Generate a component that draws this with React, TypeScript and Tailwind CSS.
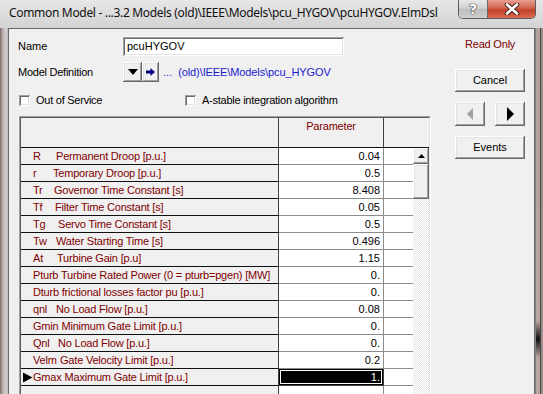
import React from 'react';

const raised =
  'bg-[#f0f0f0] shadow-[inset_-1px_-1px_0_#696969,inset_1px_1px_0_#ffffff,inset_-2px_-2px_0_#a0a0a0,inset_2px_2px_0_#e3e3e3]';
const sunken =
  'bg-white shadow-[inset_1px_1px_0_#a0a0a0,inset_-1px_-1px_0_#ffffff,inset_2px_2px_0_#696969,inset_-2px_-2px_0_#e3e3e3]';

type Row = { c: string; w: string; d: string; v: string; sel?: boolean };

const rows: Row[] = [
  { c: 'R', w: 'min-w-[20px]', d: 'Permanent Droop [p.u.]', v: '0.04' },
  { c: 'r', w: 'min-w-[17px]', d: 'Temporary Droop [p.u.]', v: '0.5' },
  { c: 'Tr', w: 'min-w-[18px]', d: 'Governor Time Constant [s]', v: '8.408' },
  { c: 'Tf', w: 'min-w-[19px]', d: 'Filter Time Constant [s]', v: '0.05' },
  { c: 'Tg', w: 'min-w-[22px]', d: 'Servo Time Constant [s]', v: '0.5' },
  { c: 'Tw', w: 'min-w-[20px]', d: 'Water Starting Time [s]', v: '0.496' },
  { c: 'At', w: 'min-w-[21px]', d: 'Turbine Gain [p.u]', v: '1.15' },
  { c: 'Pturb', w: '', d: 'Turbine Rated Power (0 = pturb=pgen) [MW]', v: '0.' },
  { c: 'Dturb', w: '', d: 'frictional losses factor pu [p.u.]', v: '0.' },
  { c: 'qnl', w: 'min-w-[20px]', d: 'No Load Flow [p.u.]', v: '0.08' },
  { c: 'Gmin', w: 'min-w-[23px]', d: 'Minimum Gate Limit [p.u.]', v: '0.' },
  { c: 'Qnl', w: 'min-w-[22px]', d: 'No Load Flow [p.u.]', v: '0.' },
  { c: 'Velm', w: 'min-w-[24px]', d: 'Gate Velocity Limit [p.u.]', v: '0.2' },
  { c: 'Gmax', w: 'min-w-[24px]', d: 'Maximum Gate Limit [p.u.]', v: '1.', sel: true },
];

function TableRow({ r }: { r: Row }) {
  return (
    <div className="flex h-[17px]">
      <div className="w-[258px] h-full flex items-center border-b border-r border-b-[#101010] border-r-[#404040] bg-[#f0f0f0] text-[#800000] tracking-[-0.2px] whitespace-nowrap overflow-hidden">
        {r.sel ? (
          <svg width="11" height="11" viewBox="0 0 11 11" className="ml-[1px] shrink-0">
            <path d="M1 0.5 L10.5 5.5 L1 10.5 Z" fill="#000" />
          </svg>
        ) : (
          <span className="w-[12px] shrink-0" />
        )}
        {r.w ? (
          <>
            <span className={`${r.w} shrink-0 whitespace-nowrap`}>{r.c}</span>
            <span className="ml-[3px]">{r.d}</span>
          </>
        ) : (
          <span>
            {r.c} {r.d}
          </span>
        )}
      </div>
      <div
        className={
          r.sel
            ? 'w-[105px] h-full flex items-center justify-end pr-[3px] bg-black text-white border-b border-r border-[#404040] shadow-[inset_0_0_0_1px_#000,inset_0_0_0_2px_#ffffff]'
            : 'w-[105px] h-full flex items-center justify-end pr-[3px] bg-white text-black border-b border-r border-b-[#8c8c8c] border-r-[#8c8c8c]'
        }
      >
        {r.v}
      </div>
      <div className="w-[29px] h-full bg-white border-b border-[#8c8c8c]" />
    </div>
  );
}

export default function App() {
  return (
    <div className="w-[543px] h-[394px] overflow-hidden bg-[#d4d4d4] font-['Liberation_Sans',Arial,sans-serif] text-[11px] leading-[13px] select-none">
      {/* Title bar */}
      <div className="h-[28px] flex items-start bg-[linear-gradient(#e6e6e6,#d3d3d3)]">
        <div className="pl-[9px] pt-[5px] text-[12px] leading-[16px] tracking-[-0.32px] text-[#111] whitespace-nowrap font-['Noto_Sans',sans-serif]">
          Common Model - ...3.2 Models (old)\IEEE\Models\pcu_HYGOV\pcuHYGOV.ElmDsl
        </div>
        <div className="ml-auto mr-[7px] flex h-[19px] rounded-b-[5px] border border-t-0 border-[#5c5c5c] overflow-hidden shrink-0">
          <div className="w-[29px] h-full flex items-center justify-center bg-[linear-gradient(#e8e8e8,#d0d0d0_45%,#bcbcbc_55%,#cfcfcf)] border-r border-[#6a6a6a]">
            <span className="text-[14px] font-bold text-white leading-[14px] font-['DejaVu_Sans',sans-serif] [text-shadow:0_0_1px_#303030,0_0_1px_#303030,0_0_1px_#303030]">
              ?
            </span>
          </div>
          <div className="w-[47px] h-full flex items-center justify-center bg-[linear-gradient(#e8a090,#d2624e_45%,#c2402a_55%,#d96b50)]">
            <svg width="16" height="12" viewBox="0 0 16 12">
              <path d="M3 1.5 L13 10.5 M13 1.5 L3 10.5" stroke="#4a2a24" strokeWidth="4.6" strokeLinecap="round" />
              <path d="M3 1.5 L13 10.5 M13 1.5 L3 10.5" stroke="#ffffff" strokeWidth="2.6" strokeLinecap="round" />
            </svg>
          </div>
        </div>
      </div>

      {/* Body */}
      <div className="flex h-[366px]">
        <div className="w-[8px] h-full bg-[linear-gradient(to_right,#7c6a64,#bdb3b0_35%,#cfcfcf_75%,#b9b9b9)]" />
        <div className="w-[527px] h-full bg-[#f0f0f0] border-l border-t border-r border-[#6a6a6a] flex">
          {/* Left area */}
          <div className="w-[446px] flex flex-col">
            {/* Name */}
            <div className="mt-[8px] h-[19px] pl-[9px] flex items-center">
              <div className="w-[105px] text-black">Name</div>
              <div className={`${sunken} w-[221px] h-[19px] flex items-center pl-[4px] text-black`}>pcuHYGOV</div>
            </div>
            {/* Model definition */}
            <div className="mt-[6px] h-[20px] pl-[9px] flex items-center">
              <div className="w-[105px] text-black tracking-[-0.25px]">Model Definition</div>
              <div className={`${raised} w-[19px] h-[20px] flex items-center justify-center`}>
                <svg width="10" height="6" viewBox="0 0 10 6">
                  <path d="M0 0 L10 0 L5 6 Z" fill="#000" />
                </svg>
              </div>
              <div className={`${raised} w-[17px] h-[20px] flex items-center justify-center`}>
                <svg width="9" height="8" viewBox="0 0 9 8">
                  <path d="M0 2.5 H4.5 V0 L9 4 L4.5 8 V5.5 H0 Z" fill="#000080" />
                </svg>
              </div>
              <span className="ml-[4px] text-[#3030e0]">...</span>
              <span className="ml-[6px] text-[#1a1ad0] tracking-[-0.1px]">(old)\IEEE\Models\pcu_HYGOV</span>
            </div>
            {/* Checkboxes */}
            <div className="mt-[13px] h-[11px] pl-[10px] flex items-center">
              <div className="w-[166px] flex items-center">
                <div className={`${sunken} w-[11px] h-[11px]`} />
                <span className="ml-[6px] text-black tracking-[-0.25px]">Out of Service</span>
              </div>
              <div className="flex items-center">
                <div className={`${sunken} w-[11px] h-[11px]`} />
                <span className="ml-[6px] text-black tracking-[-0.25px]">A-stable integration algorithm</span>
              </div>
            </div>
            {/* Table */}
            <div className="mt-[10px] ml-[10px] w-[412px] flex-1 border-l border-t border-[#a0a0a0] border-r border-r-white">
              <div className="h-full border-l border-t border-[#5a5a5a] border-r border-r-[#e3e3e3] flex flex-col">
                {/* header */}
                <div className="h-[30px] flex border-b border-[#101010] bg-[#f0f0f0]">
                  <div className="w-[258px] h-full border-r border-[#404040]" />
                  <div className="w-[105px] h-full border-r border-[#404040] flex justify-center pt-[2px] text-[#800000] tracking-[-0.2px]">
                    Parameter
                  </div>
                  <div className="flex-1" />
                </div>
                {/* body */}
                <div className="flex flex-1">
                  <div className="flex flex-col">
                    {rows.map((r, i) => (
                      <TableRow key={i} r={r} />
                    ))}
                    <div className="flex h-[17px]">
                      <div className="w-[258px] h-full border-r border-[#404040] bg-[#f0f0f0]" />
                      <div className="w-[105px] h-full bg-white border-r border-[#8c8c8c]" />
                      <div className="w-[29px] h-full bg-white" />
                    </div>
                  </div>
                  {/* scrollbar */}
                  <div className="w-[16px] flex flex-col">
                    <div className={`${raised} h-[16px] flex items-center justify-center`}>
                      <svg width="7" height="4" viewBox="0 0 7 4">
                        <path d="M0 4 L3.5 0 L7 4 Z" fill="#000" />
                      </svg>
                    </div>
                    <div className={`${raised} h-[35px]`} />
                    <div className="flex-1 bg-[image:repeating-conic-gradient(#e6e6e6_0%_25%,#ffffff_0%_50%)] bg-[length:2px_2px]" />
                  </div>
                </div>
              </div>
            </div>
          </div>
          {/* Right area */}
          <div className="w-[70px] flex flex-col">
            <div className="mt-[9px] h-[13px] pl-[10px] text-[#800000] tracking-[-0.2px] whitespace-nowrap">Read Only</div>
            <div className={`${raised} mt-[18px] h-[23px] flex items-center justify-center text-black`}>Cancel</div>
            <div className="mt-[10px] h-[24px] flex justify-between">
              <div className={`${raised} w-[30px] h-full flex items-center justify-center`}>
                <svg width="6" height="12" viewBox="0 0 6 12">
                  <path d="M6 0 L0 6 L6 12 Z" fill="#a0a0a0" />
                </svg>
              </div>
              <div className={`${raised} w-[30px] h-full flex items-center justify-center`}>
                <svg width="7" height="14" viewBox="0 0 7 14">
                  <path d="M0 0 L7 7 L0 14 Z" fill="#000" />
                </svg>
              </div>
            </div>
            <div className={`${raised} mt-[10px] h-[23px] flex items-center justify-center text-black`}>Events</div>
          </div>
        </div>
        <div className="w-[8px] h-full flex">
          <div className="w-[1px] h-full bg-[#8a7c78]" />
          <div className="w-[4px] h-full bg-[linear-gradient(#b3a29c,#b8a6a0_80%,#111_85%,#b8a6a0_90%)]" />
          <div className="w-[1px] h-full bg-[#4a4240]" />
          <div className="w-[2px] h-full bg-[#9a8f8c]" />
        </div>
      </div>
    </div>
  );
}
